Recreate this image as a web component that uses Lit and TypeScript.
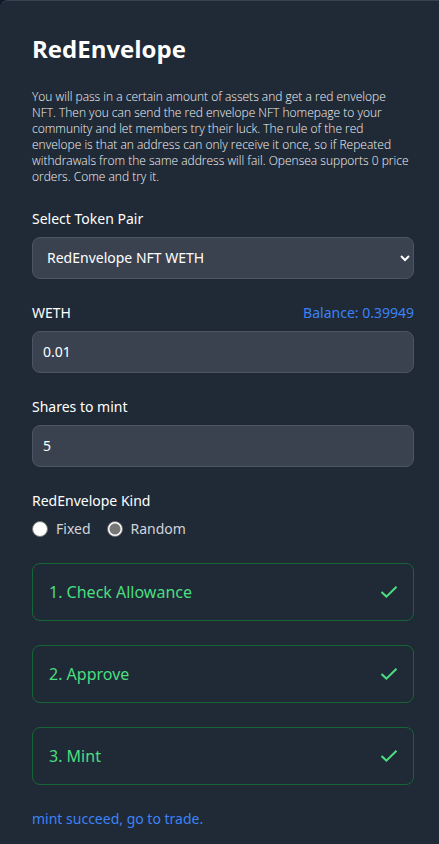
import { LitElement, html, css } from "lit";
import { customElement, state } from "lit/decorators.js";

@customElement("app-root")
export class AppRoot extends LitElement {
  static styles = css`
    :host {
      display: block;
      min-height: 100vh;
      background: #111827;
      color: #ffffff;
      font-family: "Noto Sans", "Open Sans", sans-serif;
      font-size: 14px;
      line-height: 20px;
    }
    * {
      box-sizing: border-box;
    }
    .card {
      display: flex;
      flex-direction: column;
      gap: 24px;
      min-height: 100vh;
      padding: 32px 25px 14px 32px;
      border-top: 1px solid #374151;
      border-top-left-radius: 8px;
      background: #202a36;
    }
    h1,
    p,
    fieldset {
      margin: 0;
      padding: 0;
      border: 0;
    }
    h1 {
      font-family: "Open Sans", "Noto Sans", sans-serif;
      font-size: 24px;
      line-height: 32px;
      font-weight: 700;
    }
    .intro {
      font-family: "Open Sans", "Noto Sans", sans-serif;
      font-size: 12px;
      line-height: 16px;
      font-weight: 300;
      color: #f3f4f6;
    }
    .field {
      display: flex;
      flex-direction: column;
      gap: 8px;
    }
    .row {
      display: flex;
      justify-content: space-between;
    }
    .blue {
      color: #3b82f6;
      text-decoration: none;
    }
    .control {
      width: 100%;
      height: 42px;
      padding: 0 10px 2px;
      border: 1px solid #4b5563;
      border-radius: 8px;
      background: #3a4250;
      color: #ffffff;
      font: inherit;
    }
    select.control {
      padding: 0 0 2px 10px;
    }
    legend {
      padding: 0;
      margin-bottom: 8px;
    }
    .choices {
      display: flex;
      gap: 16px;
      color: #d1d5db;
    }
    .choice {
      display: flex;
      align-items: center;
      gap: 8px;
    }
    .choice input {
      appearance: none;
      width: 16px;
      height: 16px;
      margin: 0;
      border: 1px solid #767676;
      border-radius: 50%;
      background: #ffffff;
    }
    .choice input:checked {
      background: radial-gradient(circle, #767676 5px, #ffffff 6px);
    }
    .step {
      display: flex;
      align-items: center;
      justify-content: space-between;
      height: 58px;
      padding: 0 16px;
      border: 1px solid #166534;
      border-radius: 8px;
      background: transparent;
      color: #4ade80;
      font: inherit;
      font-size: 16px;
    }
    .check {
      width: 16px;
      height: 12px;
    }
  `;

  @state() private kind = "Random";

  private steps = ["Check Allowance", "Approve", "Mint"];

  render() {
    return html`
      <main class="card">
        <h1>RedEnvelope</h1>
        <p class="intro">
          You will pass in a certain amount of assets and get a red envelope<br />
          NFT. Then you can send the red envelope NFT homepage to your
          community and let members try their luck. The rule of the red
          envelope is that an address can only receive it once, so if Repeated
          withdrawals from the same address will fail. Opensea supports 0 price
          orders. Come and try it.
        </p>
        <div class="field">
          <label for="pair">Select Token Pair</label>
          <select id="pair" class="control">
            <option>RedEnvelope NFT WETH</option>
          </select>
        </div>
        <div class="field">
          <div class="row">
            <label for="amount">WETH</label>
            <span class="blue">Balance: 0.39949</span>
          </div>
          <input id="amount" class="control" type="text" value="0.01" />
        </div>
        <div class="field">
          <label for="shares">Shares to mint</label>
          <input id="shares" class="control" type="text" value="5" />
        </div>
        <fieldset>
          <legend>RedEnvelope Kind</legend>
          <div class="choices">
            ${["Fixed", "Random"].map(
              (name) => html`
                <label class="choice">
                  <input
                    type="radio"
                    name="kind"
                    .checked=${this.kind === name}
                    @change=${() => (this.kind = name)}
                  />
                  ${name}
                </label>
              `
            )}
          </div>
        </fieldset>
        ${this.steps.map(
          (name, i) => html`
            <button class="step" type="button">
              <span>${i + 1}. ${name}</span>
              <svg class="check" viewBox="0 0 16 12" fill="none" aria-hidden="true">
                <path d="M0.5 6L5.4 10.6L15.5 0.8" stroke="currentColor" stroke-width="2" />
              </svg>
            </button>
          `
        )}
        <a class="blue" href="#trade">mint succeed, go to trade.</a>
      </main>
    `;
  }
}
